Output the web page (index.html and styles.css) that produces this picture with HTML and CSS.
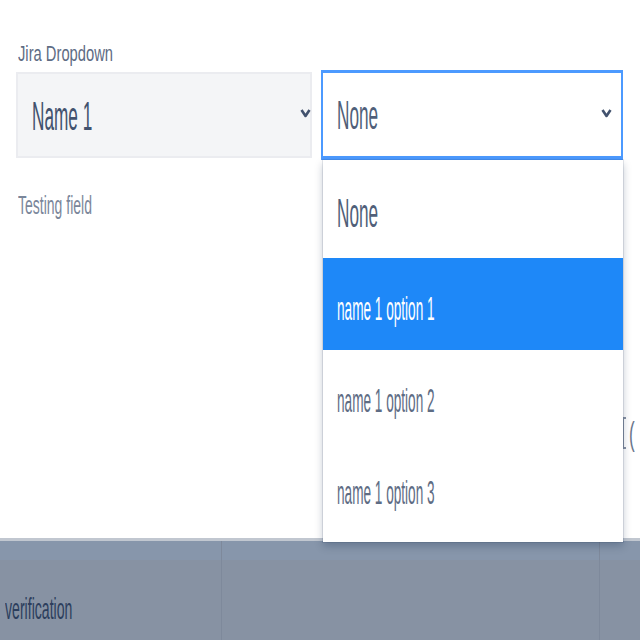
FILE: index.html
```html
<!DOCTYPE html>
<html>
<head>
<meta charset="utf-8">
<link rel="stylesheet" href="styles.css">
</head>
<body>
<div class="page">
  <main class="main">
    <div class="label"><span class="sq sq-label">Jira Dropdown</span></div>
    <div class="selects">
      <div class="select select-left">
        <span class="sq sq-value">Name 1</span>
        <svg class="chev" width="11" height="12" viewBox="0 0 11 12"><path d="M1.5 3 L5.5 9 L9.5 3" fill="none" stroke="#42526e" stroke-width="2.6" stroke-linejoin="round"/></svg>
      </div>
      <div class="select-wrap">
        <div class="select select-right">
          <span class="sq sq-none">None</span>
          <svg class="chev" width="11" height="12" viewBox="0 0 11 12"><path d="M1.5 3 L5.5 9 L9.5 3" fill="none" stroke="#42526e" stroke-width="2.6" stroke-linejoin="round"/></svg>
        </div>
        <ul class="menu">
          <li class="opt opt-first"><span class="sq sq-opt">None</span></li>
          <li class="opt opt-active"><span class="sq sq-opt">name 1 option 1</span></li>
          <li class="opt"><span class="sq sq-opt">name 1 option 2</span></li>
          <li class="opt"><span class="sq sq-opt">name 1 option 3</span></li>
        </ul>
      </div>
    </div>
    <div class="help"><span class="sq sq-help">Testing field</span></div>
    <div class="peek"><span class="box"></span><span class="sq sq-peek">(</span></div>
  </main>
  <footer class="footer">
    <div class="thead">
      <div class="col col1"></div>
      <div class="col col2"></div>
      <div class="col col3"></div>
    </div>
    <div class="trow">
      <div class="col col1"><span class="sq sq-foot">verification</span></div>
      <div class="col col2"></div>
      <div class="col col3"></div>
    </div>
  </footer>
</div>
</body>
</html>
```

FILE: styles.css
```css
* { box-sizing: border-box; }
html, body { margin: 0; padding: 0; }
body {
  width: 640px;
  height: 640px;
  overflow: hidden;
  background: #ffffff;
  font-family: "Liberation Sans", Arial, sans-serif;
}
.page { display: flex; flex-direction: column; height: 640px; }
.main { height: 538px; padding: 38px 0 0 16px; }

.sq {
  display: inline-block;
  white-space: nowrap;
  transform-origin: left center;
}
.label { height: 32px; padding-left: 2px; display: flex; align-items: center; }
.sq-label { font-size: 22px; color: #5e6c84; transform: scaleX(0.67); }

.selects { display: flex; align-items: flex-start; gap: 9px; }
.select {
  display: flex;
  align-items: center;
  justify-content: space-between;
}
.select-left {
  width: 296px;
  height: 86px;
  margin-top: 2px;
  background: #f4f5f7;
  border: 2px solid #ebecf0;
  padding: 2px 0 0 14px;
}
.select-left .chev { margin-right: -1px; margin-top: -6px; }
.select-wrap { position: relative; width: 302px; }
.select-right {
  width: 302px;
  height: 90px;
  background: #ffffff;
  border: solid #4c9aff;
  border-width: 3px 2px 4px 2px;
  padding: 2px 9px 0 14px;
}
.select-right .chev { margin-top: -6px; }
.sq-value { font-size: 40px; color: #42526e; transform: scaleX(0.43); }
.sq-none { font-size: 40px; color: #505f79; transform: scaleX(0.43); }
.chev { flex: none; }

.menu {
  position: absolute;
  left: 2px;
  top: 90px;
  width: 300px;
  height: 382px;
  margin: 0;
  padding: 6px 0 7px;
  list-style: none;
  background: #ffffff;
  box-shadow: 0 0 0 1px rgba(9,30,66,0.1), 0 4px 8px rgba(9,30,66,0.25);
  z-index: 5;
}
.opt {
  height: 92px;
  display: flex;
  align-items: center;
  padding: 8px 0 0 14px;
}
.opt-active { background: #1e88f8; }
.sq-opt { font-size: 34px; color: #5e6c84; transform: scaleX(0.40); }
.opt-active .sq-opt { color: #ffffff; }
.opt-first { padding-top: 2px; }
.opt-first .sq-opt { font-size: 40px; color: #505f79; transform: scaleX(0.43); }

.help { margin-top: 30px; padding-left: 2px; height: 30px; display: flex; align-items: center; }
.sq-help { font-size: 25px; color: #7a869a; transform: scaleX(0.56); }

.peek { margin-top: 196px; margin-left: 606px; display: flex; align-items: center; gap: 3px; height: 34px; }
.box { width: 9px; height: 32px; border: 2px solid #8993a4; border-right: none; }
.sq-peek { font-size: 34px; color: #6b778c; transform: scaleX(0.5); }

.footer { flex: 1; background: #8792a3; border-top: 3px solid #c1c7d0; display: flex; flex-direction: column; }
.thead { height: 19px; background: #8796ab; display: flex; }
.trow { flex: 1; display: flex; }
.col1 { width: 222px; border-right: 1px solid #7e899b; }
.col2 { width: 378px; border-right: 1px solid #7e899b; }
.col3 { flex: 1; }
.trow .col1 { display: flex; align-items: center; padding-left: 5px; padding-top: 18px; }
.sq-foot { font-size: 30px; color: #2c3e5d; transform: scaleX(0.47); }
```
